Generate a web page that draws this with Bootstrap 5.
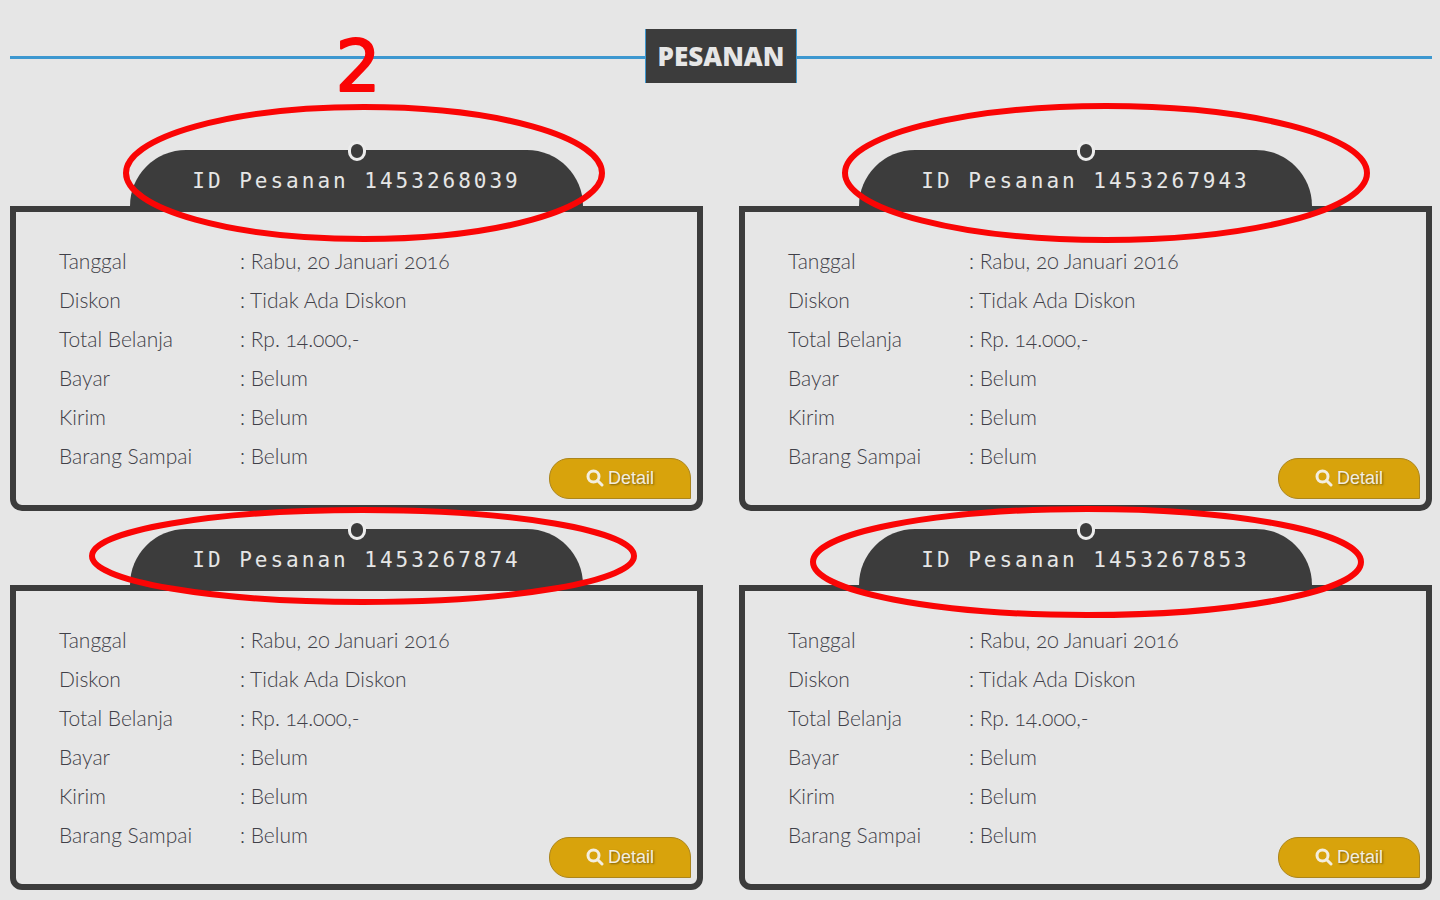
<!DOCTYPE html>
<html lang="id">
<head>
<meta charset="utf-8">
<meta name="viewport" content="width=device-width, initial-scale=1">
<title>Pesanan</title>
<link href="https://cdn.jsdelivr.net/npm/bootstrap@5.3.0/dist/css/bootstrap.min.css" rel="stylesheet">
<style>
:root { --ink: #3c3c3c; --paper: #e6e6e6; --line: #3d98d0; --pen: #fa0505; }
body { background: var(--paper); color: #404048; font-family: Lato, "Open Sans", sans-serif; }
.page { padding: 29px 8px 10px 10px; }
.rule { height: 3px; background: var(--line); margin-top: 3px; }
.page-title {
  background: var(--ink); color: var(--paper); border: solid var(--line); border-width: 0 1px;
  font: 800 26px/54px "Open Sans", sans-serif; padding: 0 12px;
}
.orders { grid-template-columns: repeat(auto-fit, minmax(min(100%, 560px), 1fr)); gap: 18px 36px; margin-top: 67px; }
.order-tab {
  background: var(--ink); color: var(--paper); margin: 0 120px; height: 56px; border-radius: 60px 60px 0 0;
  font: 21px/62px "DejaVu Sans Mono", monospace; letter-spacing: 3px;
}
.knob {
  width: 18px; height: 20px; top: -9px; left: 50%; margin-left: -9px;
  background: var(--ink); border: 3px solid #ececec; border-radius: 9px;
}
.marker { left: 50%; top: 0; width: 1px; height: 1px; overflow: visible; z-index: 2; pointer-events: none; }
.marker ellipse { fill: none; stroke: var(--pen); stroke-width: 6; }
.marker text {
  fill: var(--pen); stroke: var(--pen); stroke-width: 2; stroke-linejoin: round;
  font: 71px "DejaVu Sans", sans-serif; letter-spacing: 0; text-anchor: middle;
}
.order-box { border: 6px solid var(--ink); border-radius: 0 0 12px 12px; padding: 29px 43px 30px; }
.order-data { font-size: 21px; line-height: 39px; font-weight: 300; font-variant-numeric: oldstyle-nums; }
.order-data th { font-weight: 300; width: 181px; padding: 0; }
.order-data td { padding: 0; }
.btn-detail {
  --bs-btn-color: #f3eee0; --bs-btn-bg: #d8a30c; --bs-btn-border-color: #ab851c;
  --bs-btn-hover-color: #fff; --bs-btn-hover-bg: #c4940b; --bs-btn-hover-border-color: #96751a;
  width: 142px; height: 41px; right: 6px; bottom: 6px; padding: 0 0 2px; border-radius: 20px 20px 0 20px;
  font: 18px/36px "Liberation Sans", Arial, sans-serif; text-shadow: 1px 1px 2px #7a5c08;
}
</style>
</head>
<body>
<main class="page">
  <header class="d-flex align-items-center">
    <div class="rule flex-fill"></div>
    <h1 class="page-title m-0">PESANAN</h1>
    <div class="rule flex-fill"></div>
  </header>

  <section class="orders d-grid">
    <article>
      <h2 class="order-tab position-relative text-center mb-0">ID Pesanan 1453268039
        <span class="knob position-absolute"></span>
        <svg class="marker position-absolute"><ellipse cx="7" cy="23" rx="238" ry="66"/><text x="1" y="-59">2</text></svg>
      </h2>
      <div class="order-box position-relative">
        <table class="order-data w-100">
          <tr><th scope="row">Tanggal</th><td>: Rabu, 20 Januari 2016</td></tr>
          <tr><th scope="row">Diskon</th><td>: Tidak Ada Diskon</td></tr>
          <tr><th scope="row">Total Belanja</th><td>: Rp. 14.000,-</td></tr>
          <tr><th scope="row">Bayar</th><td>: Belum</td></tr>
          <tr><th scope="row">Kirim</th><td>: Belum</td></tr>
          <tr><th scope="row">Barang Sampai</th><td>: Belum</td></tr>
        </table>
        <button type="button" class="btn btn-detail position-absolute d-flex align-items-center justify-content-center gap-1"><svg width="18" height="18" viewBox="0 0 18 18" fill="none" stroke="currentColor" stroke-width="3"><circle cx="7.5" cy="7.5" r="5.5"/><path d="M11.5 11.5 16 16" stroke-linecap="round"/></svg>Detail</button>
      </div>
    </article>

    <article>
      <h2 class="order-tab position-relative text-center mb-0">ID Pesanan 1453267943
        <span class="knob position-absolute"></span>
        <svg class="marker position-absolute"><ellipse cx="20" cy="23" rx="261" ry="67"/></svg>
      </h2>
      <div class="order-box position-relative">
        <table class="order-data w-100">
          <tr><th scope="row">Tanggal</th><td>: Rabu, 20 Januari 2016</td></tr>
          <tr><th scope="row">Diskon</th><td>: Tidak Ada Diskon</td></tr>
          <tr><th scope="row">Total Belanja</th><td>: Rp. 14.000,-</td></tr>
          <tr><th scope="row">Bayar</th><td>: Belum</td></tr>
          <tr><th scope="row">Kirim</th><td>: Belum</td></tr>
          <tr><th scope="row">Barang Sampai</th><td>: Belum</td></tr>
        </table>
        <button type="button" class="btn btn-detail position-absolute d-flex align-items-center justify-content-center gap-1"><svg width="18" height="18" viewBox="0 0 18 18" fill="none" stroke="currentColor" stroke-width="3"><circle cx="7.5" cy="7.5" r="5.5"/><path d="M11.5 11.5 16 16" stroke-linecap="round"/></svg>Detail</button>
      </div>
    </article>

    <article>
      <h2 class="order-tab position-relative text-center mb-0">ID Pesanan 1453267874
        <span class="knob position-absolute"></span>
        <svg class="marker position-absolute"><ellipse cx="6" cy="27" rx="271" ry="46"/></svg>
      </h2>
      <div class="order-box position-relative">
        <table class="order-data w-100">
          <tr><th scope="row">Tanggal</th><td>: Rabu, 20 Januari 2016</td></tr>
          <tr><th scope="row">Diskon</th><td>: Tidak Ada Diskon</td></tr>
          <tr><th scope="row">Total Belanja</th><td>: Rp. 14.000,-</td></tr>
          <tr><th scope="row">Bayar</th><td>: Belum</td></tr>
          <tr><th scope="row">Kirim</th><td>: Belum</td></tr>
          <tr><th scope="row">Barang Sampai</th><td>: Belum</td></tr>
        </table>
        <button type="button" class="btn btn-detail position-absolute d-flex align-items-center justify-content-center gap-1"><svg width="18" height="18" viewBox="0 0 18 18" fill="none" stroke="currentColor" stroke-width="3"><circle cx="7.5" cy="7.5" r="5.5"/><path d="M11.5 11.5 16 16" stroke-linecap="round"/></svg>Detail</button>
      </div>
    </article>

    <article>
      <h2 class="order-tab position-relative text-center mb-0">ID Pesanan 1453267853
        <span class="knob position-absolute"></span>
        <svg class="marker position-absolute"><ellipse cx="1" cy="33" rx="274" ry="53"/></svg>
      </h2>
      <div class="order-box position-relative">
        <table class="order-data w-100">
          <tr><th scope="row">Tanggal</th><td>: Rabu, 20 Januari 2016</td></tr>
          <tr><th scope="row">Diskon</th><td>: Tidak Ada Diskon</td></tr>
          <tr><th scope="row">Total Belanja</th><td>: Rp. 14.000,-</td></tr>
          <tr><th scope="row">Bayar</th><td>: Belum</td></tr>
          <tr><th scope="row">Kirim</th><td>: Belum</td></tr>
          <tr><th scope="row">Barang Sampai</th><td>: Belum</td></tr>
        </table>
        <button type="button" class="btn btn-detail position-absolute d-flex align-items-center justify-content-center gap-1"><svg width="18" height="18" viewBox="0 0 18 18" fill="none" stroke="currentColor" stroke-width="3"><circle cx="7.5" cy="7.5" r="5.5"/><path d="M11.5 11.5 16 16" stroke-linecap="round"/></svg>Detail</button>
      </div>
    </article>
  </section>
</main>
<script src="https://cdn.jsdelivr.net/npm/bootstrap@5.3.0/dist/js/bootstrap.bundle.min.js"></script>
</body>
</html>
